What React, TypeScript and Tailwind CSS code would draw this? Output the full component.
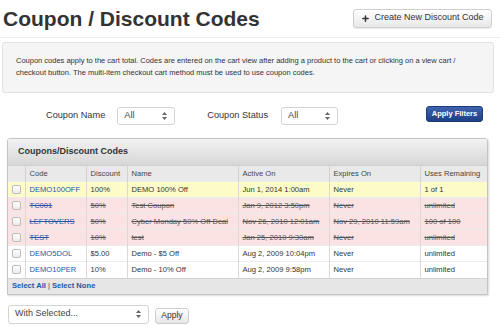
import { Plus } from 'lucide-react'

type Coupon = {
  code: string
  discount: string
  name: string
  active: string
  expires: string
  uses: string
  state: 'current' | 'expired' | 'normal'
}

const coupons: Coupon[] = [
  { code: 'DEMO100OFF', discount: '100%', name: 'DEMO 100% Off', active: 'Jun 1, 2014 1:00am', expires: 'Never', uses: '1 of 1', state: 'current' },
  { code: 'TC001', discount: '50%', name: 'Test Coupon', active: 'Jan 9, 2012 3:50pm', expires: 'Never', uses: 'unlimited', state: 'expired' },
  { code: 'LEFTOVERS', discount: '50%', name: 'Cyber Monday 50% Off Deal', active: 'Nov 26, 2010 12:01am', expires: 'Nov 29, 2010 11:59am', uses: '100 of 100', state: 'expired' },
  { code: 'TEST', discount: '10%', name: 'test', active: 'Jan 25, 2010 9:30am', expires: 'Never', uses: 'unlimited', state: 'expired' },
  { code: 'DEMO5DOL', discount: '$5.00', name: 'Demo - $5 Off', active: 'Aug 2, 2009 10:04pm', expires: 'Never', uses: 'unlimited', state: 'normal' },
  { code: 'DEMO10PER', discount: '10%', name: 'Demo - 10% Off', active: 'Aug 2, 2009 9:58pm', expires: 'Never', uses: 'unlimited', state: 'normal' },
]

// up/down arrows used by the native-looking selects
function SelectArrows() {
  return (
    <svg width="5" height="8" viewBox="0 0 5 8" className="shrink-0">
      <path d="M2.5 0 L5 3 L0 3 Z" fill="#666" />
      <path d="M2.5 8 L5 5 L0 5 Z" fill="#666" />
    </svg>
  )
}

function FakeSelect({ label, className }: { label: string; className: string }) {
  return (
    <div
      className={`flex items-center justify-between rounded-[3px] border border-[#d4d4d4] bg-white pl-[6px] pr-[7px] text-[#444] ${className}`}
    >
      <span>{label}</span>
      <SelectArrows />
    </div>
  )
}

function Checkbox() {
  return <span className="block h-[9px] w-[9px] rounded-[2px] border border-[#bcbcbc] bg-gradient-to-b from-white to-[#ececec]" />
}

export default function App() {
  const rowBg = (s: Coupon['state']) =>
    s === 'current' ? 'bg-[#fdfcc8]' : s === 'expired' ? 'bg-[#fce3e3]' : 'bg-white'

  return (
    <div className="h-[327px] w-[500px] overflow-hidden bg-white font-['Liberation_Sans',Arial,sans-serif] text-[#333]">
      {/* Page header */}
      <div className="flex h-[38px] items-center justify-between border-b border-[#eeeeee] pl-[3px] pr-[8px]">
        <h1 className="text-[21px] font-bold leading-none text-[#333]">Coupon / Discount Codes</h1>
        <button className="mb-[1px] flex h-[19px] w-[139px] items-center justify-center gap-[4px] rounded-[3px] border border-[#cfcfcf] bg-gradient-to-b from-white to-[#e8e8e8] text-[9px] text-[#333] shadow-[0_1px_1px_rgba(0,0,0,0.08)]">
          <Plus className="h-[9px] w-[9px]" strokeWidth={4} />
          Create New Discount Code
        </button>
      </div>

      {/* Info box */}
      <div className="mx-[2px] mt-[4px] h-[51px] w-[492px] rounded-[3px] border border-[#e3e3e3] bg-[#f5f5f5] px-[13px] pt-[12px] text-[7.5px] leading-[12px] text-[#333]">
        Coupon codes apply to the cart total. Codes are entered on the cart view after adding a product to the cart or clicking on a view cart /
        checkout button. The multi-item checkout cart method must be used to use coupon codes.
      </div>

      {/* Filters */}
      <div className="mt-[13px] flex h-[19px] items-center pl-[46px] pr-[17px] text-[9.2px]">
        <span>Coupon Name</span>
        <FakeSelect label="All" className="ml-[12px] h-[18px] w-[58px]" />
        <span className="ml-[32px]">Coupon Status</span>
        <FakeSelect label="All" className="ml-[13px] h-[18px] w-[57px]" />
        <button className="mb-[3px] ml-auto h-[16px] w-[57px] rounded-[3px] border border-[#1c3a7a] bg-gradient-to-b from-[#3f63ae] to-[#1f3f86] text-[7.5px] font-bold text-white">
          Apply Filters
        </button>
      </div>

      {/* Coupons panel */}
      <div className="mx-[7px] mt-[13px] w-[481px] overflow-hidden rounded-t-[3px] border border-[#c4c4c4] shadow-[1px_1px_2px_rgba(0,0,0,0.15)]">
        <div className="flex h-[26px] items-center bg-gradient-to-b from-[#f2f2f2] to-[#d7d7d7] pl-[10px] text-[9px] font-bold text-[#333]">
          Coupons/Discount Codes
        </div>
        <table className="w-full table-fixed border-collapse text-[7.6px]">
          <colgroup>
            <col className="w-[17px]" />
            <col className="w-[61px]" />
            <col className="w-[41px]" />
            <col className="w-[111px]" />
            <col className="w-[91px]" />
            <col className="w-[91px]" />
            <col />
          </colgroup>
          <thead>
            <tr className="h-[16px] border-t border-[#cfcfcf] bg-[#e9e9e9] text-left text-[#444]">
              <th className="border-r border-[#d2d2d2]" />
              <th className="border-r border-[#d2d2d2] pl-[4px] font-normal">Code</th>
              <th className="border-r border-[#d2d2d2] pl-[4px] font-normal">Discount</th>
              <th className="border-r border-[#d2d2d2] pl-[4px] font-normal">Name</th>
              <th className="border-r border-[#d2d2d2] pl-[4px] font-normal">Active On</th>
              <th className="border-r border-[#d2d2d2] pl-[4px] font-normal">Expires On</th>
              <th className="whitespace-nowrap pl-[4px] font-normal">Uses Remaining</th>
            </tr>
          </thead>
          <tbody>
            {coupons.map(c => {
              const strike = c.state === 'expired' ? 'line-through text-[#555]' : ''
              return (
                <tr key={c.code} className={`h-[16px] border-t border-[#ececec] ${rowBg(c.state)}`}>
                  <td className="border-r border-[#d9d9d9] pl-[4px]">
                    <Checkbox />
                  </td>
                  <td className={`border-r border-[#d9d9d9] pl-[4px] text-[#2457a8] ${c.state === 'expired' ? 'line-through' : ''}`}>{c.code}</td>
                  <td className={`border-r border-[#d9d9d9] pl-[4px] ${strike}`}>{c.discount}</td>
                  <td className={`whitespace-nowrap border-r border-[#d9d9d9] pl-[4px] ${strike}`}>{c.name}</td>
                  <td className={`whitespace-nowrap border-r border-[#d9d9d9] pl-[4px] ${strike}`}>{c.active}</td>
                  <td className={`whitespace-nowrap border-r border-[#d9d9d9] pl-[4px] ${strike}`}>{c.expires}</td>
                  <td className={`whitespace-nowrap pl-[4px] ${strike}`}>{c.uses}</td>
                </tr>
              )
            })}
          </tbody>
        </table>
        <div className="flex h-[16px] items-center border-t border-[#d4d4d4] bg-[#e6e6e6] pl-[4px] text-[7.6px] font-bold text-[#2457a8]">
          Select All <span className="mx-[2px] font-normal text-[#555]">|</span> Select None
        </div>
      </div>

      {/* Bulk action */}
      <div className="mt-[10px] flex items-start pl-[8px]">
        <FakeSelect label="With Selected..." className="h-[19px] w-[141px] text-[9px]" />
        <button className="ml-[6px] mt-[3px] h-[16px] w-[34px] rounded-[3px] border border-[#cfcfcf] bg-gradient-to-b from-white to-[#e6e6e6] text-[8.5px] text-[#333]">
          Apply
        </button>
      </div>
    </div>
  )
}
